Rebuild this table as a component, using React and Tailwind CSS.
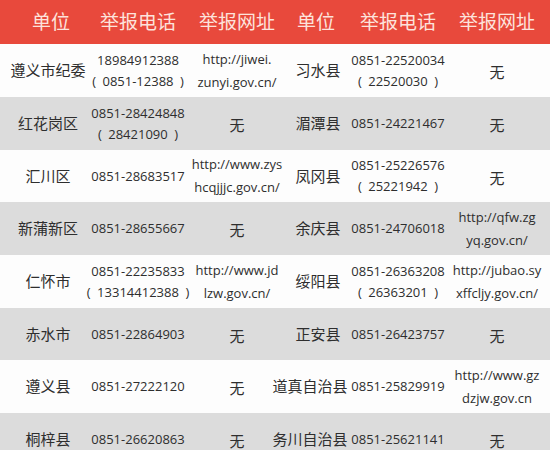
import React from "react";

const rows = [
  ["遵义市纪委", ["18984912388", "(\u20020851-12388\u2002)"], ["http://jiwei.", "zunyi.gov.cn/"], "习水县", ["0851-22520034", "(\u200222520030\u2002)"], ["无"]],
  ["红花岗区", ["0851-28424848", "(\u200228421090\u2002)"], ["无"], "湄潭县", ["0851-24221467"], ["无"]],
  ["汇川区", ["0851-28683517"], ["http://www.zys", "hcqjjjc.gov.cn/"], "凤冈县", ["0851-25226576", "(\u200225221942\u2002)"], ["无"]],
  ["新蒲新区", ["0851-28655667"], ["无"], "余庆县", ["0851-24706018"], ["http://qfw.zg", "yq.gov.cn/"]],
  ["仁怀市", ["0851-22235833", "(\u200213314412388\u2002)"], ["http://www.jd", "lzw.gov.cn/"], "绥阳县", ["0851-26363208", "(\u200226363201\u2002)"], ["http://jubao.sy", "xffcljy.gov.cn/"]],
  ["赤水市", ["0851-22864903"], ["无"], "正安县", ["0851-26423757"], ["无"]],
  ["遵义县", ["0851-27222120"], ["无"], "道真自治县", ["0851-25829919"], ["http://www.gz", "dzjw.gov.cn"]],
  ["桐梓县", ["0851-26620863"], ["无"], "务川自治县", ["0851-25621141"], ["无"]],
];

const heights = ["h-[53px]", "h-[53px]", "h-[52px]", "h-[53px]", "h-[53px]", "h-[52px]", "h-[53px]", "h-[53px]"];

const grid = "grid grid-cols-[96px_84px_114px_44px_120px_78px] pr-[14px]";

const Lines = ({ lines, url }) => (
  <div className="flex flex-col items-center justify-center whitespace-nowrap">
    {lines.map((l, i) => (
      <span
        key={i}
        className={
          l === "无"
            ? "text-[15px] leading-[21px] mt-[4px]"
            : url
            ? "text-[13px] leading-[23px]"
            : "text-[13px] leading-[21px]"
        }
      >
        {l}
      </span>
    ))}
  </div>
);

export default function App() {
  return (
    <div
      className="w-[550px] h-[450px] overflow-hidden bg-[#fdfdfd] text-[#2e2e2e]"
      style={{ fontFamily: '"Open Sans", "Noto Sans CJK SC", sans-serif' }}
    >
      <div className={`${grid} h-[44px] bg-[#e8493c] text-[#fde3dc] text-[19px] items-center`}>
        <div className="text-center pl-[6px]">单位</div>
        <div className="text-center">举报电话</div>
        <div className="text-center whitespace-nowrap">举报网址</div>
        <div className="flex justify-center whitespace-nowrap">单位</div>
        <div className="flex justify-center whitespace-nowrap">举报电话</div>
        <div className="flex justify-center whitespace-nowrap">举报网址</div>
      </div>
      {rows.map((r, i) => (
        <div key={i} className={`${grid} ${heights[i]} ${i % 2 ? "bg-[#dcdcdc]" : "bg-[#fdfdfd]"} items-center`}>
          <div className="text-center text-[15px] whitespace-nowrap">{r[0]}</div>
          <Lines lines={r[1]} />
          <Lines lines={r[2]} url />
          <div className="flex justify-center text-[15px] whitespace-nowrap">
            <span className={r[3].length > 3 ? "mr-[12px]" : "ml-[4px]"}>{r[3]}</span>
          </div>
          <Lines lines={r[4]} />
          <Lines lines={r[5]} url />
        </div>
      ))}
    </div>
  );
}
